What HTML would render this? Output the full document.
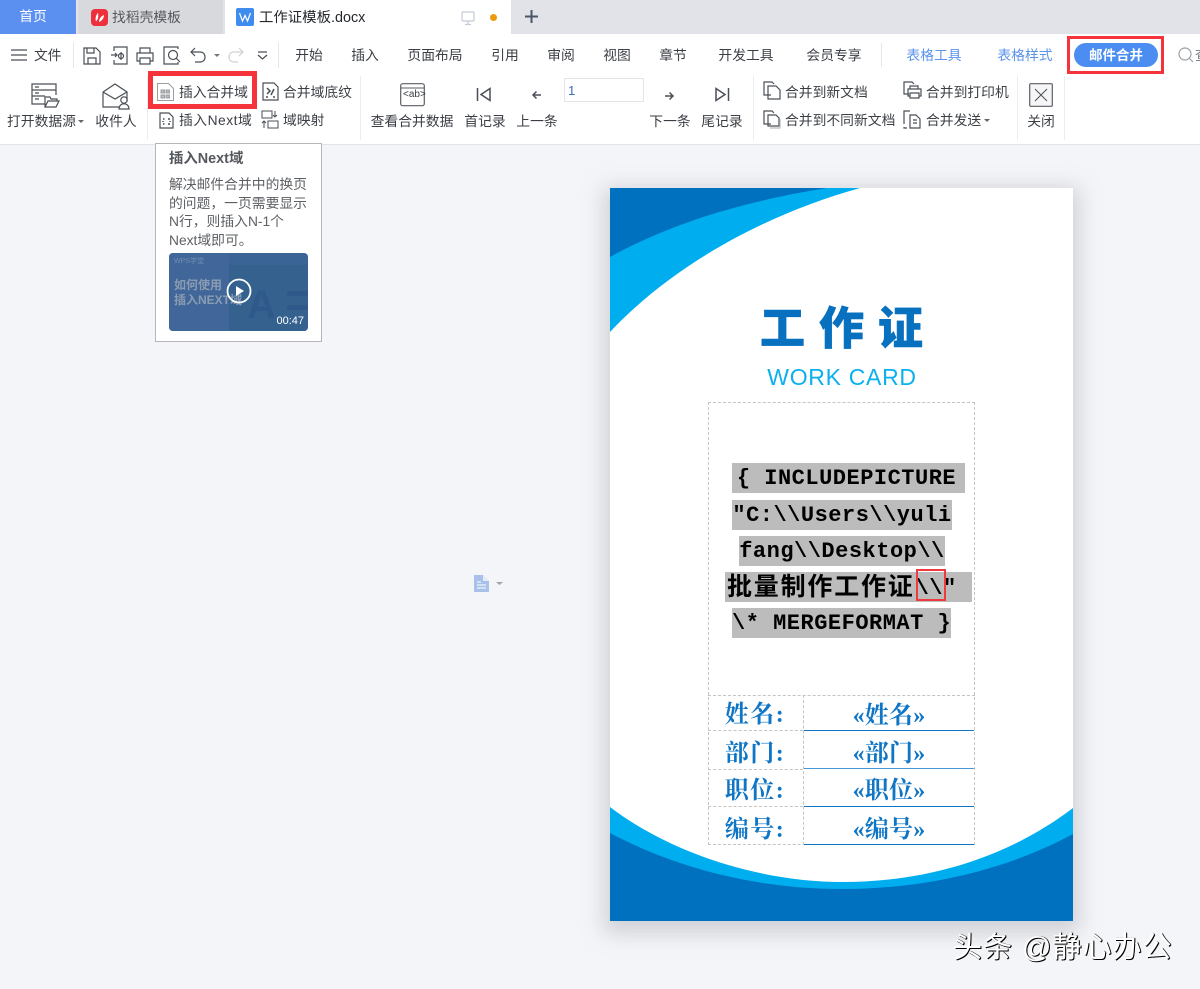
<!DOCTYPE html>
<html><head><meta charset="utf-8">
<style>
html,body{margin:0;padding:0;width:1200px;height:989px;overflow:hidden;background:#f4f5f8}
body{position:relative;font-family:"Liberation Sans","Noto Sans CJK SC",sans-serif;color:#3b3f45}
.t{position:absolute;white-space:nowrap;font-size:13.800px;line-height:18px}
.c{transform:translateX(-50%)}
.b{position:absolute}
svg{position:absolute;overflow:visible}
.ic{fill:none;stroke:#4a4f57;stroke-width:1.2}
.f{position:absolute;white-space:nowrap;font-family:"Liberation Mono","Noto Sans CJK SC",monospace;font-weight:bold;font-size:22px;letter-spacing:.5px;line-height:32px;color:#000;background:#bcbcbc;height:30px;text-align:center}
.lab{position:absolute;white-space:nowrap;font-family:"Liberation Serif","Noto Serif CJK SC",serif;font-weight:bold;font-size:24px;line-height:30px;color:#0f75c5;transform:translateX(-50%)}
</style></head><body>

<!-- tab bar -->
<div class="b" style="left:0;top:0;width:1200px;height:34px;background:#e1e3e8"></div>
<div class="b" style="left:0;top:0;width:76px;height:34px;background:#5b8ff0"></div>
<div class="t c" style="left:33px;top:8px;color:#fff">首页</div>
<div class="b" style="left:78px;top:0;width:145px;height:34px;background:#d8d9dd"></div>
<svg style="left:91px;top:9px" width="17" height="17"><rect width="17" height="17" rx="4" fill="#ee2f3c"/><path d="M5 12.500 C4 9 5 6 7 4 C7.500 7 7.500 10 5 12.500Z M8 13 C8 10 10 7 13 6 C13 9 11 12 8 13Z" fill="#fff"/></svg>
<div class="t" style="left:112px;top:9px;color:#55585e">找稻壳模板</div>
<div class="b" style="left:225px;top:0;width:286px;height:34px;background:#fff"></div>
<svg style="left:236px;top:8px" width="18" height="18"><rect width="18" height="18" rx="2" fill="#3f8cef"/><path d="M3.500 5 L6.500 13 L9 7.500 L11.500 13 L14.500 5" fill="none" stroke="#fff" stroke-width="1.200"/></svg>
<div class="t" style="left:259px;top:9px;font-size:14.400px;color:#24272c">工作证模板.docx</div>
<svg style="left:461px;top:11px" width="15" height="15"><rect x="1" y="1" width="12" height="9" rx="1" fill="none" stroke="#c3cbd8" stroke-width="1.200"/><path d="M7 10v3M4 13.500h6" stroke="#c3cbd8" stroke-width="1.200"/></svg>
<div class="b" style="left:490px;top:14px;width:7px;height:7px;border-radius:50%;background:#ec9a0e"></div>
<svg style="left:524px;top:9px" width="15" height="15"><path d="M7.500 1v13M1 7.500h13" stroke="#4a5568" stroke-width="2"/></svg>

<!-- ribbon bg -->
<div class="b" style="left:0;top:34px;width:1200px;height:110px;background:#fff;border-bottom:1px solid #e3e4e8"></div>

<!-- menu row -->
<svg style="left:11px;top:49px" width="17" height="12"><path d="M0 1h16M0 6h16M0 11h16" stroke="#4a4f57" stroke-width="1.200"/></svg>
<div class="t" style="left:34px;top:47px">文件</div>
<div class="b" style="left:73px;top:42px;width:1px;height:26px;background:#e6e7ea"></div>
<svg class="ic" style="left:83px;top:47px" width="18" height="18"><path d="M1 1h12l4 4v12H1z"/><path d="M4 1v5h7V1M5 17v-6h8v6"/></svg>
<svg class="ic" style="left:110px;top:46px" width="18" height="19"><path d="M4 5V1h13v17H4v-4"/><path d="M1 9h6M5 7l2 2-2 2"/><circle cx="11" cy="10" r="2.500"/><path d="M11 6v8"/></svg>
<svg class="ic" style="left:136px;top:47px" width="18" height="18"><path d="M4 6V1h10v5M4 14H1V6h16v8h-3M4 11h10v6H4z"/></svg>
<svg class="ic" style="left:163px;top:46px" width="18" height="19"><path d="M15 3V1H1v17h14v-2"/><circle cx="10" cy="9" r="4.500"/><path d="M13 12l4 4"/></svg>
<svg class="ic" style="left:190px;top:47px" width="17" height="17"><path d="M5 1L1 5l4 4"/><path d="M1 5h9c3 0 5 2 5 5s-2 5-5 5H5"/></svg>
<svg style="left:214px;top:54px" width="6" height="4"><path d="M0 0h6L3 3z" fill="#777"/></svg>
<svg style="left:227px;top:47px;fill:none;stroke:#cfd1d5;stroke-width:1.200" width="17" height="17"><path d="M12 1l4 4-4 4"/><path d="M16 5H7C4 5 2 7 2 10s2 5 5 5h4"/></svg>
<svg class="ic" style="left:257px;top:51px" width="11" height="11"><path d="M1 1h9M1 4l4.500 4L10 4"/></svg>
<div class="b" style="left:278px;top:42px;width:1px;height:26px;background:#e6e7ea"></div>
<div class="t c" style="left:309px;top:47px">开始</div>
<div class="t c" style="left:365px;top:47px">插入</div>
<div class="t c" style="left:435px;top:47px">页面布局</div>
<div class="t c" style="left:505px;top:47px">引用</div>
<div class="t c" style="left:561px;top:47px">审阅</div>
<div class="t c" style="left:617px;top:47px">视图</div>
<div class="t c" style="left:673px;top:47px">章节</div>
<div class="t c" style="left:746px;top:47px">开发工具</div>
<div class="t c" style="left:834px;top:47px">会员专享</div>
<div class="b" style="left:881px;top:43px;width:1px;height:24px;background:#e6e7ea"></div>
<div class="t c" style="left:934px;top:47px;color:#5b93ec">表格工具</div>
<div class="t c" style="left:1025px;top:47px;color:#5b93ec">表格样式</div>
<div class="b" style="left:1067px;top:36px;width:97px;height:38px;background:#f5333a"></div>
<div class="b" style="left:1070px;top:39px;width:91px;height:32px;background:#fff"></div>
<div class="b" style="left:1074px;top:43px;width:84px;height:24px;border-radius:12px;background:#4b8df0"></div>
<div class="t c" style="left:1116px;top:47px;color:#fff;font-weight:bold;font-size:13.500px">邮件合并</div>
<svg style="left:1178px;top:47px" width="16" height="17"><circle cx="7" cy="7" r="6" fill="none" stroke="#9aa0a8" stroke-width="1.200"/><path d="M11 11l4 4" stroke="#9aa0a8" stroke-width="1.200"/></svg>
<div class="t" style="left:1195px;top:47px;color:#7a8088">查</div>

<!-- ribbon row 2 -->
<svg class="ic" style="left:31px;top:83px" width="29" height="26"><path d="M14 21H1V1h24v11M1 7h24M1 13h13M4 4h4M4 10h4M4 16h4"/><path d="M14 24V14h5l1 2h6v2M14 24h11l3-6H17z"/></svg>
<div class="t" style="left:7px;top:113px">打开数据源</div>
<svg style="left:78px;top:120px" width="6" height="4"><path d="M0 0h6L3 3z" fill="#666"/></svg>
<svg class="ic" style="left:101px;top:82px" width="30" height="29"><path d="M2 10L14 2l12 8v9M2 10v15h16M2 10l12 7 12-7"/><circle cx="23" cy="18" r="3.200"/><path d="M18 27c0-7 10-7 10 0z"/></svg>
<div class="t c" style="left:116px;top:113px">收件人</div>
<div class="b" style="left:147px;top:76px;width:1px;height:64px;background:#ecedf0"></div>

<div class="b" style="left:148px;top:71px;width:109px;height:38px;background:#f5333a"></div>
<div class="b" style="left:153px;top:76px;width:99px;height:28px;background:#fff"></div>
<svg style="left:157px;top:83px;fill:none;stroke:#9a9da3;stroke-width:1" width="17" height="18"><path d="M.5.500h11l5 5v12H.500z"/><rect x="4" y="7" width="3.500" height="3" fill="#bbb"/><rect x="9" y="7" width="3.500" height="3" fill="#bbb"/><rect x="4" y="12" width="3.500" height="3" fill="#bbb"/><rect x="9" y="12" width="3.500" height="3" fill="#bbb"/></svg>
<div class="t" style="left:179px;top:84px">插入合并域</div>
<svg class="ic" style="left:262px;top:82px" width="17" height="19"><path d="M1 1h11l4 4v13H1z"/><path d="M5 6l3 3-3 3M12 7l-3 6M4 15h2M11 15h2" stroke-width="1.500"/></svg>
<div class="t" style="left:283px;top:84px">合并域底纹</div>
<svg class="ic" style="left:159px;top:112px" width="15" height="17"><path d="M1 1h9l4 4v11H1z"/><path d="M4 7h1.500M9 7h2M4 12h1.500M9 12h2M4 9v1M11 9v1" stroke-width="1.500"/></svg>
<div class="t" style="left:179px;top:112px;letter-spacing:.5px">插入Next域</div>
<svg class="ic" style="left:261px;top:110px;stroke-width:1" width="18" height="19"><rect x="1" y="1" width="10" height="7"/><rect x="7" y="11" width="10" height="7"/><path d="M14 1v6M12 5l2 2 2-2M3 11v7M1 13l2-2 2 2"/></svg>
<div class="t" style="left:283px;top:112px">域映射</div>
<div class="b" style="left:360px;top:76px;width:1px;height:64px;background:#ecedf0"></div>

<svg style="left:400px;top:83px" width="25" height="24"><rect x=".7" y=".7" width="23.600" height="22" rx="2" fill="none" stroke="#5a5e66" stroke-width="1.200"/><path d="M1 5h23" stroke="#5a5e66"/></svg>
<div class="t" style="left:403px;top:88px;font-size:10px;line-height:14px;font-family:'Liberation Sans'">&lt;ab&gt;</div>
<div class="t c" style="left:412px;top:113px">查看合并数据</div>
<svg class="ic" style="left:476px;top:87px;stroke-width:1.500" width="16" height="15"><path d="M1.500 1v13M14 1.500v12L5 7.500z"/></svg>
<div class="t c" style="left:485px;top:113px">首记录</div>
<svg class="ic" style="left:532px;top:90px;stroke-width:1.500" width="10" height="10"><path d="M9 5H1M4.500 1.500L1 5l3.500 3.500"/></svg>
<div class="t c" style="left:537px;top:113px">上一条</div>
<div class="b" style="left:564px;top:78px;width:78px;height:22px;border:1px solid #e2e4e9;background:#fff"></div>
<div class="t" style="left:568px;top:82px;color:#3a6eb5;font-size:13px">1</div>
<svg class="ic" style="left:664px;top:91px;stroke-width:1.500" width="10" height="10"><path d="M1 5h8M5.500 1.500L9 5 5.500 8.500"/></svg>
<div class="t c" style="left:670px;top:113px">下一条</div>
<svg class="ic" style="left:714px;top:87px;stroke-width:1.500" width="16" height="15"><path d="M14.500 1v13M2 1.500v12L11 7.500z"/></svg>
<div class="t c" style="left:722px;top:113px">尾记录</div>
<div class="b" style="left:753px;top:76px;width:1px;height:64px;background:#ecedf0"></div>

<svg class="ic" style="left:763px;top:81px" width="18" height="19"><path d="M8 14H1V1h8l2 2"/><path d="M5 5h8l4 4v9H5z"/></svg>
<div class="t" style="left:785px;top:84px">合并到新文档</div>
<svg class="ic" style="left:763px;top:110px" width="18" height="19"><path d="M8 14H1V1h8l2 2"/><path d="M5 5h8l3 3v8H5z"/><path d="M7 18h10V9" stroke="#bbb"/></svg>
<div class="t" style="left:785px;top:112px">合并到不同新文档</div>
<svg class="ic" style="left:903px;top:81px" width="19" height="19"><path d="M6 13H1V1h8l2 2"/><path d="M7 8V5h8v3M7 15H5V8h13v7h-2M7 12h9v5H7z"/></svg>
<div class="t" style="left:926px;top:84px">合并到打印机</div>
<svg class="ic" style="left:903px;top:110px" width="18" height="19"><path d="M7 1H1v13M1 17v1h3"/><path d="M7 5h6l4 4v9H7zM10 10h4M10 13h4"/></svg>
<div class="t" style="left:926px;top:112px">合并发送</div>
<svg style="left:984px;top:119px" width="6" height="4"><path d="M0 0h6L3 3z" fill="#666"/></svg>
<div class="b" style="left:1017px;top:76px;width:1px;height:64px;background:#ecedf0"></div>
<svg style="left:1029px;top:83px" width="24" height="24"><rect x=".7" y=".7" width="22.600" height="22.600" rx="1" fill="#f6f6f7" stroke="#5a5e66" stroke-width="1.200"/><path d="M6 6l12 12M18 6L6 18" stroke="#4a4f57"/></svg>
<div class="t c" style="left:1041px;top:113px">关闭</div>
<div class="b" style="left:1064px;top:76px;width:1px;height:64px;background:#ecedf0"></div>

<!-- tooltip -->
<div class="b" style="left:155px;top:143px;width:165px;height:197px;background:#fff;border:1px solid #b4b6b9"></div>
<div class="t" style="left:169px;top:150px;font-size:14.400px;font-weight:bold;color:#55585c">插入Next域</div>
<div class="t" style="left:169px;top:176px;color:#5c5f63;font-size:13.800px">解决邮件合并中的换页</div>
<div class="t" style="left:169px;top:195px;color:#5c5f63;font-size:13.800px">的问题，一页需要显示</div>
<div class="t" style="left:169px;top:213px;color:#5c5f63;font-size:13.800px">N行，则插入N-1个</div>
<div class="t" style="left:169px;top:232px;color:#5c5f63;font-size:13.800px">Next域即可。</div>
<div class="b" style="left:169px;top:253px;width:139px;height:78px;background:#3a6496;border-radius:4px;overflow:hidden">
  <div class="b" style="left:0;top:0;width:60px;height:78px;background:#41679a"></div>
  <div class="b" style="left:60px;top:12px;width:79px;height:66px;background:#35618f"></div>
  <div class="t" style="left:78px;top:30px;font-size:40px;line-height:44px;font-weight:bold;color:#30598b">A</div>
  <div class="b" style="left:118px;top:38px;width:21px;height:5px;background:#30598b"></div>
  <div class="b" style="left:118px;top:52px;width:21px;height:5px;background:#30598b"></div>
  <div class="t" style="left:5px;top:4px;font-size:7px;line-height:10px;color:#6f8db0">WPS学堂</div>
  <div class="t" style="left:5px;top:25px;font-size:12px;line-height:15px;font-weight:bold;color:#8b9cb2">如何使用</div>
  <div class="t" style="left:5px;top:40px;font-size:12px;line-height:15px;font-weight:bold;color:#8b9cb2">插入NEXT域</div>
  <svg style="left:57px;top:25px" width="26" height="26"><circle cx="13" cy="13" r="11.500" fill="none" stroke="#fff" stroke-width="1.800"/><path d="M10 8l8 5-8 5z" fill="#fff"/></svg>
  <div class="t" style="right:4px;top:60px;font-size:11px;line-height:16px;color:#fff">00:47</div>
</div>

<!-- side icon -->
<svg style="left:474px;top:575px" width="30" height="17"><path d="M0 0h9l6 6v11H0z" fill="#a9c1ea"/><path d="M9 0v6h6" fill="#e6edf9"/><path d="M3 7h4M3 10h9M3 13h9" stroke="#fff"/><path d="M22 7h7l-3.500 3z" fill="#a0a4aa"/></svg>

<!-- page -->
<div class="b" style="left:610px;top:188px;width:463px;height:733px;background:#fff;box-shadow:0 6px 20px 6px rgba(150,155,165,.4)"></div>
<svg style="left:610px;top:188px" width="463" height="733" viewBox="0 0 463 733">
  <path d="M0 0H250C150 28 60 80 0 144Z" fill="#00aeef"/>
  <path d="M0 0H217C130 14 60 36 0 69Z" fill="#0071bf"/>
  <path d="M0 619C60 665 150 694 232 694C320 694 400 668 463 620V733H0Z" fill="#00aeef"/>
  <path d="M0 645C70 682 150 701 232 701C320 701 400 680 463 646V733H0Z" fill="#0071bf"/>
</svg>
<div class="t" style="left:760px;top:299px;font-size:45px;line-height:60px;font-weight:900;letter-spacing:14px;color:#0771bf;-webkit-text-stroke:.6px #0771bf">工作证</div>
<div class="t c" style="left:842px;top:362px;font-size:23px;line-height:30px;letter-spacing:.7px;color:#0bb0ee">WORK CARD</div>

<!-- table -->
<div class="b" style="left:708px;top:402px;width:265px;height:441px;border:1px dashed #c4c4c4;box-sizing:content-box"></div>
<div class="b" style="left:708px;top:695px;width:267px;border-top:1px dashed #c4c4c4"></div>
<div class="b" style="left:708px;top:730px;width:95px;border-top:1px dashed #c4c4c4"></div>
<div class="b" style="left:708px;top:769px;width:95px;border-top:1px dashed #c4c4c4"></div>
<div class="b" style="left:708px;top:806px;width:95px;border-top:1px dashed #c4c4c4"></div>
<div class="b" style="left:803px;top:695px;height:150px;border-left:1px dashed #c4c4c4"></div>
<div class="b" style="left:804px;top:730px;width:170px;height:1px;background:#0f75c5"></div>
<div class="b" style="left:804px;top:768px;width:170px;height:1px;background:#4a97d6"></div>
<div class="b" style="left:804px;top:806px;width:170px;height:1px;background:#0f75c5"></div>
<div class="b" style="left:804px;top:844px;width:170px;height:1px;background:#0f75c5"></div>

<div class="f" style="left:732px;top:463px;width:233px;text-indent:-4px">{ INCLUDEPICTURE</div>
<div class="f" style="left:732px;top:500px;width:220px">"C:\\Users\\yuli</div>
<div class="f" style="left:739px;top:536px;width:206px">fang\\Desktop\\</div>
<div class="f" style="left:725px;top:572px;width:247px;text-align:left"><span style="font-size:25px;letter-spacing:1.800px;margin-left:2px;position:relative;top:1px">批量制作工作证</span><span style="margin-left:1px">\\"</span></div>
<div class="b" style="left:916px;top:569px;width:26px;height:28px;border:2px solid #ee3b3f"></div>
<div class="f" style="left:732px;top:608px;width:219px">\* MERGEFORMAT }</div>

<div class="lab" style="left:755px;top:700px;letter-spacing:1.500px">姓名:</div>
<div class="lab" style="left:755px;top:739px;letter-spacing:1.500px">部门:</div>
<div class="lab" style="left:755px;top:776px;letter-spacing:1.500px">职位:</div>
<div class="lab" style="left:755px;top:815px;letter-spacing:1.500px">编号:</div>
<div class="lab" style="left:889px;top:701px;letter-spacing:.2px">«姓名»</div>
<div class="lab" style="left:889px;top:739px;letter-spacing:.2px">«部门»</div>
<div class="lab" style="left:889px;top:776px;letter-spacing:.2px">«职位»</div>
<div class="lab" style="left:889px;top:815px;letter-spacing:.2px">«编号»</div>

<!-- watermark -->
<div class="t" style="left:953px;top:930px;font-size:29px;letter-spacing:1px;line-height:36px;color:#fff;text-shadow:1px 1px 0 #000,1px 0 0 #222">头条 @静心办公</div>
</body></html>
